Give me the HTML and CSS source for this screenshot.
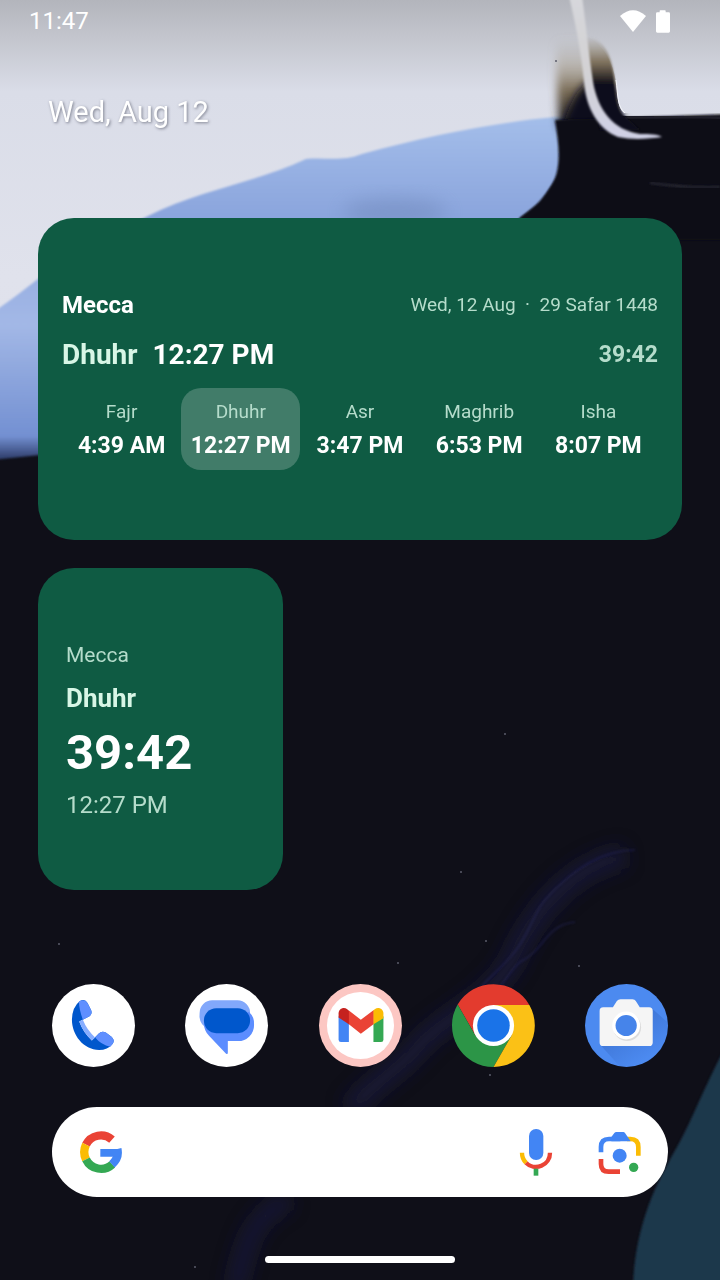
FILE: index.html
```html
<!DOCTYPE html>
<html lang="en">
<head>
<meta charset="utf-8">
<meta name="viewport" content="width=device-width, initial-scale=1">
<title>Home</title>
<link rel="stylesheet" href="styles.css">
</head>
<body>
<div class="screen">
  <svg class="wallpaper" viewBox="0 0 720 1280" preserveAspectRatio="xMidYMid slice" aria-hidden="true">
    <defs>
      <linearGradient id="sky" x1="0" y1="0" x2="0" y2="460" gradientUnits="userSpaceOnUse">
        <stop offset="0" stop-color="#b3b5bc"/>
        <stop offset=".08" stop-color="#c3c5cd"/>
        <stop offset=".2" stop-color="#dadde8"/>
        <stop offset=".6" stop-color="#e0e2ec"/>
        <stop offset="1" stop-color="#dfe0ea"/>
      </linearGradient>
      <linearGradient id="wave" x1="0" y1="120" x2="0" y2="460" gradientUnits="userSpaceOnUse">
        <stop offset="0" stop-color="#a3bde9"/>
        <stop offset=".28" stop-color="#8ba5dd"/>
        <stop offset=".6" stop-color="#a3b8e6"/>
        <stop offset=".93" stop-color="#7390d2"/>
        <stop offset="1" stop-color="#2c3a66"/>
      </linearGradient>
      <linearGradient id="smoke" x1="0" y1="38" x2="0" y2="125" gradientUnits="userSpaceOnUse">
        <stop offset="0" stop-color="#a39c8e" stop-opacity="0"/>
        <stop offset=".3" stop-color="#9a8d74" stop-opacity=".4"/>
        <stop offset=".6" stop-color="#6b5a3e" stop-opacity=".85"/>
        <stop offset="1" stop-color="#15151c"/>
      </linearGradient>
      <linearGradient id="ink" x1="0" y1="38" x2="0" y2="84" gradientUnits="userSpaceOnUse">
        <stop offset="0" stop-color="#8f8777" stop-opacity=".1"/>
        <stop offset=".5" stop-color="#6b5a3e" stop-opacity=".7"/>
        <stop offset="1" stop-color="#11111a"/>
      </linearGradient>
      <linearGradient id="ribbon" x1="0" y1="0" x2="0" y2="140" gradientUnits="userSpaceOnUse">
        <stop offset="0" stop-color="#d6d7db"/>
        <stop offset=".5" stop-color="#d3d2d4"/>
        <stop offset="1" stop-color="#cfd0e6"/>
      </linearGradient>
      <filter id="soft1" x="-20%" y="-20%" width="140%" height="140%"><feGaussianBlur stdDeviation="1"/></filter>
      <filter id="soft4" x="-30%" y="-30%" width="160%" height="160%"><feGaussianBlur stdDeviation="4"/></filter>
      <filter id="soft9" x="-50%" y="-50%" width="200%" height="200%"><feGaussianBlur stdDeviation="9"/></filter>
    </defs>
    <rect width="720" height="1280" fill="#0f0f18"/>
    <path fill="url(#sky)" d="M0 0H720V116H600L380 300 0 420Z"/>
    <path fill="url(#wave)" filter="url(#soft1)" d="M-8 313C25 291 45 272 75 250 105 232 130 225 148 216 200 190 255 183 306 159 325 157 342 162 362 154 430 135 500 122 555 117L570 117 561 172 550 188 541 202 532 209 520 218L300 430 40 455-8 460Z"/>
    <ellipse cx="395" cy="212" rx="52" ry="14" fill="#6880b0" opacity=".4" filter="url(#soft9)"/>
    <path fill="url(#smoke)" filter="url(#soft4)" d="M559 128C557 100 556 70 556 40L600 38 618 60V128Z"/>
    <path fill="#11111a" filter="url(#soft4)" d="M562 128C570 104 576 90 588 82L612 86 625 125 620 140H565Z"/>
    <path fill="#0f0f18" filter="url(#soft1)" d="M555 120C560 150 561 172 550 188 541 202 532 209 520 218V240H730V114L640 117Z"/>
    <path fill="url(#sky)" d="M575-2H722V113L690 112 650 113H624C617 108 618 94 616 82 613 62 604 46 590 38Z"/>
    <path fill="url(#ink)" filter="url(#soft1)" d="M584 38C600 36 609 50 612 66 616 84 614 104 622 114L640 130H600Z"/>
    <path fill="none" stroke="#f5f6fa" stroke-width="1" d="M616 80C618 94 617 107 625 113"/>
    <path fill="url(#ribbon)" filter="url(#soft1)" d="M569-4H582C586 25 589 55 593 82 598 110 613 130 640 134 650 134 657 134 662 137 648 139 632 140 618 137 598 129 586 108 584 82 581 50 575 22 569-4Z"/>
    <path fill="none" stroke="#3a3b46" stroke-width="2" opacity=".7" filter="url(#soft1)" d="M626 117C660 118 690 115 722 118"/>
    <path fill="none" stroke="#292a36" stroke-width="2" filter="url(#soft1)" d="M650 183Q685 188 720 187"/>
    <g fill="none" stroke="#1f2058" filter="url(#soft9)">
      <path stroke-width="22" opacity=".45" d="M625 856C580 865 540 900 515 955 495 1000 440 1020 420 1045 400 1070 375 1080 350 1110"/>
      <path stroke-width="18" opacity=".45" d="M290 1200C250 1215 245 1250 235 1290"/>
    </g>
    <g fill="none" stroke="#2a2b63" stroke-width="2" opacity=".4" filter="url(#soft1)">
      <path d="M635 850C600 850 570 872 545 900 532 915 530 935 512 955 500 970 480 985 470 1000"/>
      <path d="M575 922C545 925 545 950 520 962 510 970 500 990 488 1000"/>
    </g>
    <g fill="#5b5c6a">
      <circle cx="398" cy="963" r="1"/><circle cx="461" cy="872" r="1"/><circle cx="505" cy="734" r="1"/><circle cx="486" cy="941" r="1"/><circle cx="59" cy="944" r="1"/><circle cx="579" cy="966" r="1"/><circle cx="490" cy="1075" r="1"/><circle cx="195" cy="1267" r="1"/><circle cx="556" cy="61" r="1"/>
    </g>
    <path fill="#1f374c" filter="url(#soft1)" d="M724 1050C705 1085 692 1120 677 1147 658 1180 634 1225 633 1290H724Z"/>
  </svg>

  <header class="status">
    <time class="clock">11:47</time>
    <div class="indicators">
      <svg class="wifi" viewBox="780 28 78 66" role="img" aria-label="Wi-Fi"><path fill="#fff" d="M780 46Q819 12 858 46L819 94Z"/></svg>
      <svg class="battery" viewBox="889 26 42 69" role="img" aria-label="Battery"><path fill="#fff" d="M900 33V29Q900 27 902 27H916Q918 27 918 29V33H927Q931 33 931 37V90Q931 94 927 94H893Q889 94 889 90V37Q889 33 893 33Z"/></svg>
    </div>
  </header>

  <p class="today">Wed, Aug 12</p>

  <main class="widgets">
    <section class="card times">
      <div class="row">
        <h2 class="city">Mecca</h2>
        <p class="dates">Wed, 12 Aug &nbsp;·&nbsp; 29 Safar 1448</p>
      </div>
      <div class="row">
        <p class="next"><span class="mint">Dhuhr</span><span>12:27 PM</span></p>
        <p class="left">39:42</p>
      </div>
      <ul class="prayers">
        <li class="prayer"><span class="name">Fajr</span><span class="at">4:39 AM</span></li>
        <li class="prayer current"><span class="name">Dhuhr</span><span class="at">12:27 PM</span></li>
        <li class="prayer"><span class="name">Asr</span><span class="at">3:47 PM</span></li>
        <li class="prayer"><span class="name">Maghrib</span><span class="at">6:53 PM</span></li>
        <li class="prayer"><span class="name">Isha</span><span class="at">8:07 PM</span></li>
      </ul>
    </section>
    <section class="card countdown">
      <p class="place">Mecca</p>
      <h2 class="upcoming mint">Dhuhr</h2>
      <p class="timer">39:42</p>
      <p class="due">12:27 PM</p>
    </section>
  </main>

  <nav class="dock">
    <a class="app" href="#phone" aria-label="Phone">
      <svg viewBox="66 71 250 250"><circle cx="191" cy="196" r="125" fill="#fff"/>
        <path fill="#0057cc" d="M150 122Q166 115 173 128L184 150Q188 161 179 168L148 184Q160 217 186 241L207 220Q217 211 229 218L246 231Q256 241 249 251 233 270 208 270C160 268 126 225 126 178Q127 140 150 122Z"/>
        <path fill="#5f8fff" d="M147 124Q164 115 173 128L184 150Q188 161 179 168L159 179Q148 150 147 124ZM196 232L207 220Q217 211 229 218L246 231Q256 241 249 251L242 260Q214 254 196 232Z"/>
        <path fill="#86adff" d="M148 184L159 179Q171 210 196 232L186 241Q160 217 148 184Z"/></svg>
    </a>
    <a class="app" href="#messages" aria-label="Messages">
      <svg viewBox="465 71 250 250"><circle cx="590" cy="196" r="125" fill="#fff"/>
        <path fill="#82a8fb" d="M547 120H623A38 38 0 0 1 661 160L600 200H524A48 48 0 0 1 509 158 38 38 0 0 1 547 120Z"/>
        <path fill="#5c8dff" d="M658 155A48 48 0 0 1 673 195 48 48 0 0 1 625 243H594V277Q594 285 588 280L538 228Q522 212 522 190Z"/>
        <rect x="522" y="144" width="139" height="75" rx="37" fill="#0057cc"/></svg>
    </a>
    <a class="app" href="#gmail" aria-label="Gmail">
      <svg viewBox="55 71 250 250"><circle cx="180" cy="196" r="125" fill="#fcc7c3"/><circle cx="180" cy="196" r="101" fill="#fff"/>
        <path fill="#4285f4" d="M114 168L145 190V246H121Q114 246 114 239Z"/>
        <path fill="#34a853" d="M249 168L219 190V246H242Q249 246 249 239Z"/>
        <path fill="#c5221f" d="M114 172V160C114 146 129 139 140 147L146 152V193Z"/>
        <path fill="#fbbc04" d="M249 174V160C249 146 234 139 223 147L218 151V193Z"/>
        <path fill="#ea4335" d="M145 151L181 179 219 150V192L181 221 145 192Z"/></svg>
    </a>
    <a class="app" href="#chrome" aria-label="Chrome">
      <svg viewBox="456 71 250 250">
        <path fill="#e33b2e" d="M581 134H689A125 125 0 0 0 473 133L527 227Z"/>
        <path fill="#2c9547" d="M473 133A125 125 0 0 0 581 321L635 227H527Z"/>
        <path fill="#fbc116" d="M689 134A125 125 0 0 1 581 321L635 227 581 134Z"/>
        <circle cx="581" cy="196" r="62" fill="#fff"/><circle cx="581" cy="196" r="49" fill="#1a73e8"/></svg>
    </a>
    <a class="app" href="#camera" aria-label="Camera">
      <svg viewBox="76 71 250 250">
        <defs>
          <clipPath id="disc"><circle cx="201" cy="196" r="125"/></clipPath>
          <linearGradient id="cast" x1="200" y1="180" x2="270" y2="290" gradientUnits="userSpaceOnUse"><stop offset="0" stop-color="#3568c4"/><stop offset="1" stop-color="#3568c4" stop-opacity="0"/></linearGradient>
        </defs>
        <circle cx="201" cy="196" r="125" fill="#4c8af0"/>
        <path fill="url(#cast)" opacity=".6" clip-path="url(#disc)" d="M277 144L340 200V330H190L124 256H270Z"/>
        <path fill="#f5f5f5" d="M160 141L172 122Q176 117 183 117H219Q226 117 229 122L241 141H269Q280 141 280 152V247Q280 258 269 258H131Q120 258 120 247V152Q120 141 131 141Z"/>
        <circle cx="203" cy="201" r="42" fill="#dcdcdc"/><circle cx="200" cy="196" r="42" fill="#fff"/><circle cx="200" cy="196" r="32" fill="#4684ea"/></svg>
    </a>
  </nav>

  <form class="search" role="search">
    <button class="tool" type="submit" aria-label="Search">
      <svg class="g" viewBox="120 120 126 126" fill="none" stroke-width="25">
        <path stroke="#ea4335" d="M138 161A50 50 0 0 1 216 146"/>
        <path stroke="#fbbc04" d="M138 205A50 50 0 0 1 138 161"/>
        <path stroke="#34a853" d="M217 220A50 50 0 0 1 138 205"/>
        <path stroke="#4285f4" d="M232 174Q238 201 216 220"/>
        <path fill="#4285f4" stroke="none" d="M181 174H243V184L238 197H181Z"/>
      </svg>
    </button>
    <input class="query" type="text" aria-label="Search the web">
    <button class="tool" type="button" aria-label="Voice search">
      <svg class="mic" viewBox="106 115 120 141" fill="none" stroke-width="13">
        <rect x="145" y="115" width="43" height="93" rx="21" fill="#4285f4"/>
        <path stroke="#ea4335" d="M136 216A42 42 0 0 0 208 186"/>
        <path stroke="#fbbc04" d="M124 186A42 42 0 0 0 136 216"/>
        <path fill="#34a853" d="M159 234H173V255H159Z"/>
      </svg>
    </button>
    <button class="tool" type="button" aria-label="Search with camera">
      <svg class="lens" viewBox="350 115 135 135" fill="none" stroke-width="14">
        <path stroke="#fbbc04" d="M440 142H450Q474 142 474 166V192"/>
        <path stroke="#4285f4" d="M362 182V166Q362 142 386 142H420"/>
        <path fill="#4285f4" d="M393 136L402 124Q404 121 408 121H429Q432 121 434 124L451 149H393Z"/>
        <path stroke="#ea4335" d="M362 202V217Q362 240 385 240H419"/>
        <circle cx="418" cy="192" r="21" fill="#4285f4"/><circle cx="460" cy="227" r="14" fill="#34a853"/>
      </svg>
    </button>
  </form>
  <div class="handle"></div>
</div>
</body>
</html>
```

FILE: styles.css
```css
* { box-sizing: border-box; margin: 0; padding: 0; }

body {
  font-family: Roboto, "Noto Sans", sans-serif;
  color: #fff;
  background: #0f0f18;
}

.screen {
  position: relative;
  isolation: isolate;
  display: flex;
  flex-direction: column;
  min-height: 100vh;
  overflow: hidden;
}

.wallpaper {
  position: absolute;
  inset: 0;
  z-index: -1;
  width: 100%;
  height: 100%;
}

.status {
  display: flex;
  justify-content: space-between;
  align-items: center;
  height: 42px;
  padding: 0 50px 0 29px;
}
.clock { font-size: 24px; line-height: 28px; }
.indicators { display: flex; align-items: center; gap: 10px; }
.wifi { width: 26px; height: 22px; }
.battery { width: 14px; height: 23px; }

.today {
  padding: 52px 48px 0;
  font-size: 29px;
  line-height: 36px;
  text-shadow: 1px 1px 3px rgba(60, 64, 80, .6);
}

.widgets {
  display: grid;
  grid-template-columns: 38fr 62fr;
  row-gap: 28px;
  padding: 88px 38px 0;
}
.card {
  display: flex;
  flex-direction: column;
  justify-content: center;
  min-height: 322px;
  border-radius: 36px;
  background: #0f5b43;
}
.times { grid-column: 1 / -1; gap: 16px; padding: 24px; }
.row { display: flex; justify-content: space-between; align-items: center; }
.city { font-size: 24px; line-height: 34px; font-weight: 700; }
.dates { font-size: 19px; line-height: 34px; color: #b5dccb; }
.next { display: flex; gap: 15px; font-size: 28px; line-height: 34px; font-weight: 700; }
.mint { color: #d8f6e6; }
.left { font-size: 23px; line-height: 34px; font-weight: 700; color: #b5dccb; }

.prayers { display: grid; grid-template-columns: repeat(5, 1fr); list-style: none; }
.prayer {
  display: flex;
  flex-direction: column;
  align-items: center;
  gap: 8px;
  padding: 12px 0 10px;
  border-radius: 20px;
}
.current { background: #417c69; }
.name { font-size: 19px; line-height: 24px; color: #b5dccb; }
.at { font-size: 23px; line-height: 28px; font-weight: 700; white-space: nowrap; }

.countdown { gap: 10px; padding: 28px; }
.place { font-size: 21px; line-height: 32px; color: #b5dccb; }
.upcoming { font-size: 26px; line-height: 34px; font-weight: 700; }
.timer { font-size: 49px; line-height: 56px; font-weight: 700; }
.due { font-size: 24px; line-height: 28px; color: #b5dccb; }

.dock {
  display: flex;
  justify-content: space-between;
  margin-top: auto;
  padding: 40px 52px 0;
}
.app { display: block; width: 83px; height: 83px; }
.app svg { display: block; width: 100%; height: 100%; overflow: visible; }

.search {
  display: flex;
  align-items: center;
  height: 90px;
  margin: 40px 52px 0;
  padding: 0 26px 0 28px;
  border-radius: 45px;
  background: #fff;
}
.tool { display: block; border: 0; background: none; }
.tool svg { display: block; }
.query {
  flex: 1;
  min-width: 0;
  height: 56px;
  border: 0;
  outline: 0;
  background: transparent;
  font: 24px Roboto, sans-serif;
  color: #202124;
}
.g { width: 42px; height: 42px; }
.mic { width: 40px; height: 47px; }
.lens { width: 45px; height: 45px; margin-left: 41px; }

.handle {
  align-self: center;
  width: 190px;
  height: 7px;
  margin: 59px 0 17px;
  border-radius: 4px;
  background: #fff;
}
```
